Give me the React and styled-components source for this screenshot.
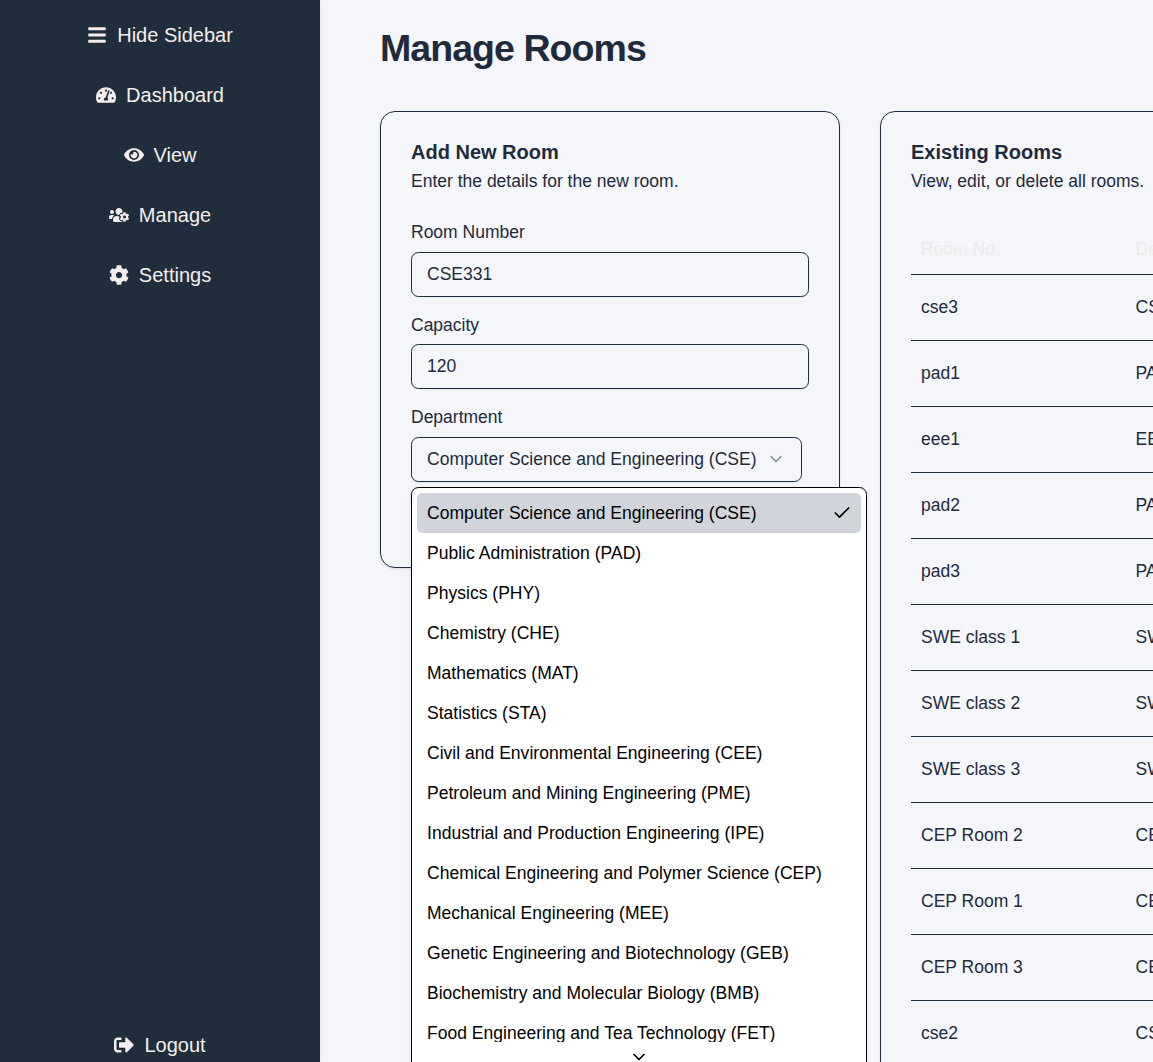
import React from "react";
import styled, { createGlobalStyle, css } from "styled-components";
import { FaBars, FaTachometerAlt, FaEye, FaUsersCog, FaCog, FaSignOutAlt } from "react-icons/fa";
import { Check, ChevronDown } from "lucide-react";

const GlobalStyle = createGlobalStyle`
  *, *::before, *::after { box-sizing: border-box; }
  html, body { margin: 0; height: 100%; overflow: hidden; }
  body {
    background: #f4f6fa;
    color: #1f2a3c;
    font-family: "Liberation Sans", Arial, Helvetica, sans-serif;
    font-size: 17.5px;
    line-height: 25px;
  }
`;

const Page = styled.div`
  display: flex;
  width: 100%;
  height: 1062px;
  overflow: hidden;
`;

const Sidebar = styled.aside`
  display: flex;
  flex: 0 0 320px;
  flex-direction: column;
  justify-content: space-between;
  padding: 10px 0 0;
  background: #1f2d3d;
  box-shadow: 0 0 5px rgba(0, 0, 0, 0.08);
`;

const Nav = styled.nav`
  display: flex;
  flex-direction: column;
  gap: 10px;
`;

const NavItem = styled.a`
  display: flex;
  align-items: center;
  justify-content: center;
  gap: 10px;
  height: 50px;
  color: #f4eeee;
  font-size: 20px;
  line-height: 30px;
  svg { flex: none; }
`;

const FooterNav = styled.div`
  height: 42px;
`;

const Main = styled.main`
  flex: 1;
  min-width: 0;
  padding: 25px 0 0 60px;
`;

const Title = styled.h1`
  margin: 0 0 40px;
  font-size: 37.5px;
  line-height: 46px;
  font-weight: 700;
  letter-spacing: -0.025em;
`;

const Cards = styled.div`
  display: flex;
  align-items: flex-start;
  gap: 40px;
`;

const Card = styled.section`
  flex: none;
  width: ${(p) => p.$width}px;
  height: ${(p) => p.$height}px;
  padding: 27px 30px 30px;
  border: 1px solid #1f2a3c;
  border-radius: 15px;
  box-shadow: 0 1px 3px rgba(0, 0, 0, 0.1), 0 1px 2px -1px rgba(0, 0, 0, 0.1);
`;

const CardTitle = styled.h2`
  margin: 0;
  font-size: 20px;
  line-height: 26px;
  font-weight: 700;
`;

const CardText = styled.p`
  margin: 4px 0 0;
`;

const Form = styled.form`
  display: flex;
  flex-direction: column;
  gap: 16px;
  margin-top: 26px;
`;

const Field = styled.div`
  position: relative;
  display: flex;
  flex-direction: column;
  align-items: flex-start;
  gap: 6.5px;
`;

const Label = styled.label`
  line-height: 25px;
`;

const control = css`
  height: 45px;
  border: 1px solid #1f2a3c;
  border-radius: 7.5px;
  background: transparent;
  color: #1f2a3c;
  font: inherit;
  box-shadow: 0 1px 2px rgba(0, 0, 0, 0.05);
`;

const Input = styled.input`
  ${control}
  width: 100%;
  padding: 0 15px;
  outline: none;
`;

const SelectTrigger = styled.button`
  ${control}
  display: flex;
  align-items: center;
  justify-content: space-between;
  width: 391px;
  padding: 0 15px;
  letter-spacing: 0.02px;
  white-space: nowrap;
  svg { opacity: 0.5; }
`;

const Menu = styled.div`
  position: absolute;
  top: 81.5px;
  left: 0;
  z-index: 10;
  width: 456px;
  height: 590px;
  border: 1px solid #000;
  border-radius: 7.5px;
  background: #fff;
  color: #000;
  letter-spacing: 0.02px;
  box-shadow: 0 4px 6px -1px rgba(0, 0, 0, 0.1), 0 2px 4px -2px rgba(0, 0, 0, 0.1);
`;

const MenuList = styled.div`
  height: 554px;
  padding: 5px;
  overflow: hidden;
`;

const MenuItem = styled.div`
  display: flex;
  align-items: center;
  justify-content: space-between;
  height: 40px;
  padding: 1px 9px 0 10px;
  line-height: 26px;
  border-radius: 5px;
  background: ${(p) => (p.$selected ? "#d1d5db" : "transparent")};
  svg { margin-bottom: 1px; }
`;

const ScrollDown = styled.div`
  display: flex;
  justify-content: center;
  padding: 5px 0;
`;

const Table = styled.div`
  margin-top: 30px;
`;

const Row = styled.div`
  display: grid;
  grid-template-columns: 214.5px 1fr;
  align-items: center;
  height: ${(p) => (p.$head ? 51 : 66)}px;
  padding: 0 10px;
  border-bottom: 1px solid #1f2a3c;
  color: ${(p) => (p.$head ? "#ececec" : "#1f2a3c")};
`;

const departments = [
  "Computer Science and Engineering (CSE)",
  "Public Administration (PAD)",
  "Physics (PHY)",
  "Chemistry (CHE)",
  "Mathematics (MAT)",
  "Statistics (STA)",
  "Civil and Environmental Engineering (CEE)",
  "Petroleum and Mining Engineering (PME)",
  "Industrial and Production Engineering (IPE)",
  "Chemical Engineering and Polymer Science (CEP)",
  "Mechanical Engineering (MEE)",
  "Genetic Engineering and Biotechnology (GEB)",
  "Biochemistry and Molecular Biology (BMB)",
  "Food Engineering and Tea Technology (FET)",
];

const rooms = [
  ["cse3", "CSE"],
  ["pad1", "PAD"],
  ["eee1", "EEE"],
  ["pad2", "PAD"],
  ["pad3", "PAD"],
  ["SWE class 1", "SWE"],
  ["SWE class 2", "SWE"],
  ["SWE class 3", "SWE"],
  ["CEP Room 2", "CEP"],
  ["CEP Room 1", "CEP"],
  ["CEP Room 3", "CEP"],
  ["cse2", "CSE"],
];

const links = [
  ["Hide Sidebar", FaBars],
  ["Dashboard", FaTachometerAlt],
  ["View", FaEye],
  ["Manage", FaUsersCog],
  ["Settings", FaCog],
];

export default function App() {
  return (
    <>
      <GlobalStyle />
      <Page>
        <Sidebar>
          <Nav>
            {links.map(([name, Icon]) => (
              <NavItem key={name}>
                <Icon />
                {name}
              </NavItem>
            ))}
          </Nav>
          <FooterNav>
            <NavItem>
              <FaSignOutAlt />
              Logout
            </NavItem>
          </FooterNav>
        </Sidebar>
        <Main>
          <Title>Manage Rooms</Title>
          <Cards>
            <Card $width={460} $height={457}>
              <CardTitle>Add New Room</CardTitle>
              <CardText>Enter the details for the new room.</CardText>
              <Form>
                <Field>
                  <Label>Room Number</Label>
                  <Input defaultValue="CSE331" />
                </Field>
                <Field>
                  <Label>Capacity</Label>
                  <Input defaultValue="120" />
                </Field>
                <Field>
                  <Label>Department</Label>
                  <SelectTrigger type="button">
                    {departments[0]}
                    <ChevronDown size={20} />
                  </SelectTrigger>
                  <Menu>
                    <MenuList>
                      {departments.map((name, i) => (
                        <MenuItem key={name} $selected={i === 0}>
                          {name}
                          {i === 0 && <Check size={20} />}
                        </MenuItem>
                      ))}
                    </MenuList>
                    <ScrollDown>
                      <ChevronDown size={20} />
                    </ScrollDown>
                  </Menu>
                </Field>
              </Form>
            </Card>
            <Card $width={800} $height={1100}>
              <CardTitle>Existing Rooms</CardTitle>
              <CardText>View, edit, or delete all rooms.</CardText>
              <Table>
                <Row $head>
                  <span>Room No.</span>
                  <span>Department</span>
                </Row>
                {rooms.map(([room, dept]) => (
                  <Row key={room}>
                    <span>{room}</span>
                    <span>{dept}</span>
                  </Row>
                ))}
              </Table>
            </Card>
          </Cards>
        </Main>
      </Page>
    </>
  );
}
